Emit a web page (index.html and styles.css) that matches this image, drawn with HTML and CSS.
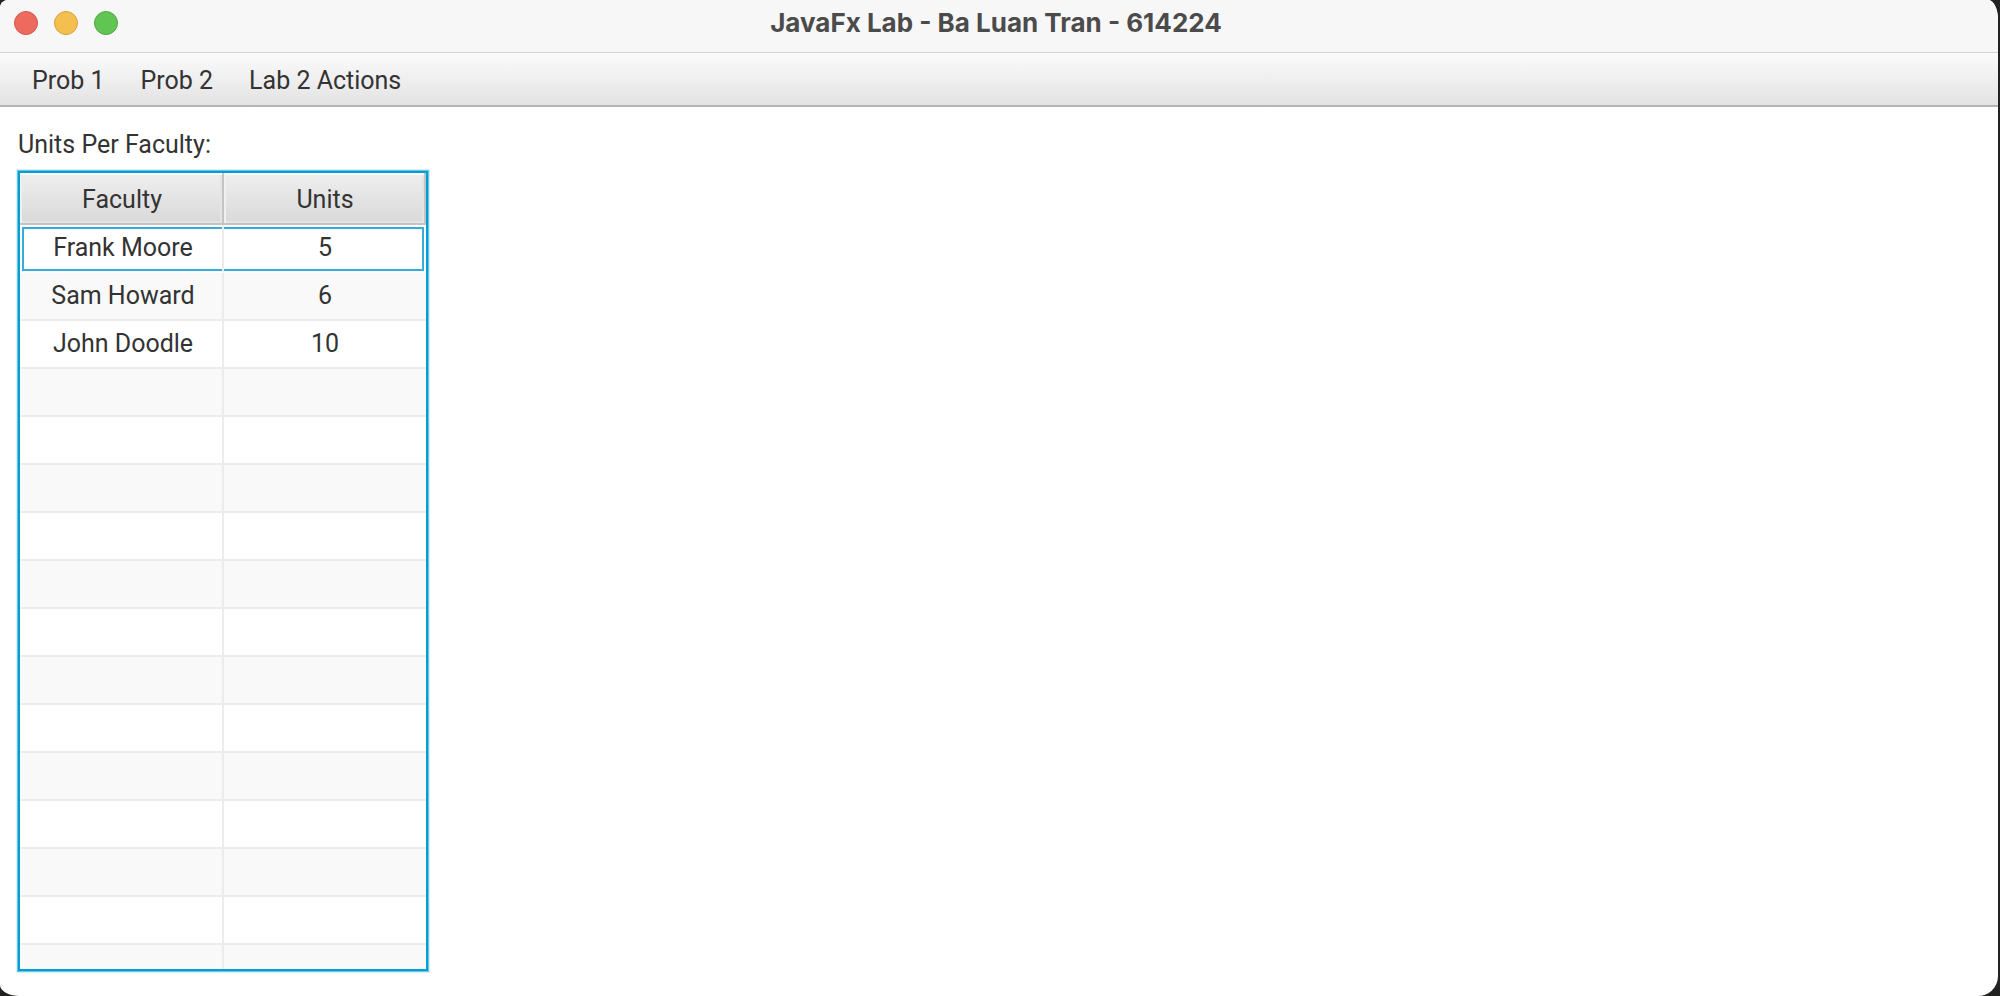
FILE: index.html
```html
<!DOCTYPE html>
<html lang="en">
<head>
<meta charset="utf-8">
<title>JavaFx Lab - Ba Luan Tran - 614224</title>
<link rel="stylesheet" href="styles.css">
</head>
<body>
<div class="window">
  <header class="titlebar">
    <div class="controls">
      <button class="dot close" type="button" aria-label="Close"></button>
      <button class="dot minimize" type="button" aria-label="Minimize"></button>
      <button class="dot zoom" type="button" aria-label="Zoom"></button>
    </div>
    <h1 class="title">JavaFx Lab - Ba Luan Tran - 614224</h1>
  </header>
  <nav class="menubar">
    <button class="menu" type="button">Prob 1</button>
    <button class="menu" type="button">Prob 2</button>
    <button class="menu" type="button">Lab 2 Actions</button>
  </nav>
  <main class="content">
    <h2 class="label" id="units-label">Units Per Faculty:</h2>
    <div class="table-view">
      <table class="table" aria-labelledby="units-label">
        <thead>
          <tr><th scope="col">Faculty</th><th scope="col">Units</th></tr>
        </thead>
        <tbody>
          <tr class="focused"><td>Frank Moore</td><td>5</td></tr>
          <tr><td>Sam Howard</td><td>6</td></tr>
          <tr><td>John Doodle</td><td>10</td></tr>
          <tr><td></td><td></td></tr>
          <tr><td></td><td></td></tr>
          <tr><td></td><td></td></tr>
          <tr><td></td><td></td></tr>
          <tr><td></td><td></td></tr>
          <tr><td></td><td></td></tr>
          <tr><td></td><td></td></tr>
          <tr><td></td><td></td></tr>
          <tr><td></td><td></td></tr>
          <tr><td></td><td></td></tr>
          <tr><td></td><td></td></tr>
          <tr><td></td><td></td></tr>
          <tr><td></td><td></td></tr>
        </tbody>
      </table>
    </div>
  </main>
</div>
</body>
</html>
```
FILE: styles.css
```css
* {
  box-sizing: border-box;
}

body {
  margin: 0;
  padding-right: 2px;
  background: #222220;
  color: #333;
  font: 25px/34px Roboto, "Liberation Sans", sans-serif;
}

.window {
  display: flex;
  flex-direction: column;
  height: 100vh;
  overflow: hidden;
  background: #fff;
  border-radius: 8px 10px 20px 20px / 8px 20px 20px 11px;
}

.titlebar {
  display: grid;
  grid-template-columns: 1fr auto 1fr;
  align-items: center;
  height: 53px;
  padding: 0 20px 6px 14px;
  background: #f7f7f7;
  border-bottom: 1px solid #d3d3d3;
}

.controls {
  display: flex;
  gap: 16px;
}

.dot {
  width: 24px;
  height: 24px;
  padding: 0;
  border: 1px solid;
  border-radius: 50%;
}

.close {
  background: #ed6a5e;
  border-color: #d65549;
}

.minimize {
  background: #f5bf4f;
  border-color: #d8a140;
}

.zoom {
  background: #61c554;
  border-color: #50a73f;
}

.title {
  margin: 0;
  color: #4b4b4b;
  font: 700 26px/34px Inter, sans-serif;
}

.menubar {
  display: flex;
  height: 54px;
  padding: 0 14px;
  background: linear-gradient(#fbfbfb, #e3e3e3);
  border-bottom: 2px solid #b5b5b5;
}

.menu {
  padding: 3px 18px 0;
  border: 0;
  background: none;
  color: inherit;
  font: inherit;
}

.content {
  display: flex;
  flex: 1;
  flex-direction: column;
  align-items: flex-start;
  gap: 9px;
  min-height: 0;
  padding: 21px 18px 25px;
}

.label {
  margin: 0;
  font: inherit;
}

.table-view {
  flex: 1;
  min-height: 0;
  overflow: hidden;
  border: 2px solid #039ed3;
  box-shadow: 0 0 0 1px #69c5e5, 0 0 0 2px #d9f0f8;
}

.table {
  width: 406px;
  table-layout: fixed;
  border-collapse: separate;
  border-spacing: 0;
  text-align: center;
}

.table th {
  height: 52px;
  padding: 3px 0 0 2px;
  border: solid #c4c4c4;
  border-width: 0 2px 2px 0;
  background: linear-gradient(#efefef, #d9d9d9);
  box-shadow: inset 0 2px #fafafa, inset 2px 0 #f0f0f0, inset -2px -2px #e4e4e4;
  font-weight: 400;
}

.table th:first-child,
.table td:first-child {
  width: 204px;
}

.table td {
  height: 48px;
  padding: 0;
  border-bottom: 2px solid #ececec;
}

.table td:first-child {
  padding-left: 4px;
  border-right: 2px solid #ececec;
}

.table tbody tr:nth-child(even) {
  background: #f9f9f9;
}

.table .focused td {
  border-bottom-color: #fff;
}

.table .focused td:first-child {
  background:
    linear-gradient(#36acd8, #36acd8) 2px 2px / 200px 2px no-repeat padding-box,
    linear-gradient(#36acd8, #36acd8) 2px 100% / 200px 2px no-repeat padding-box,
    linear-gradient(#36acd8, #36acd8) 2px 2px / 2px 100% no-repeat padding-box;
}

.table .focused td:last-child {
  background:
    linear-gradient(#36acd8, #36acd8) 0 2px / 200px 2px no-repeat padding-box,
    linear-gradient(#36acd8, #36acd8) 0 100% / 200px 2px no-repeat padding-box,
    linear-gradient(#36acd8, #36acd8) 198px 2px / 2px 100% no-repeat padding-box;
}
```
